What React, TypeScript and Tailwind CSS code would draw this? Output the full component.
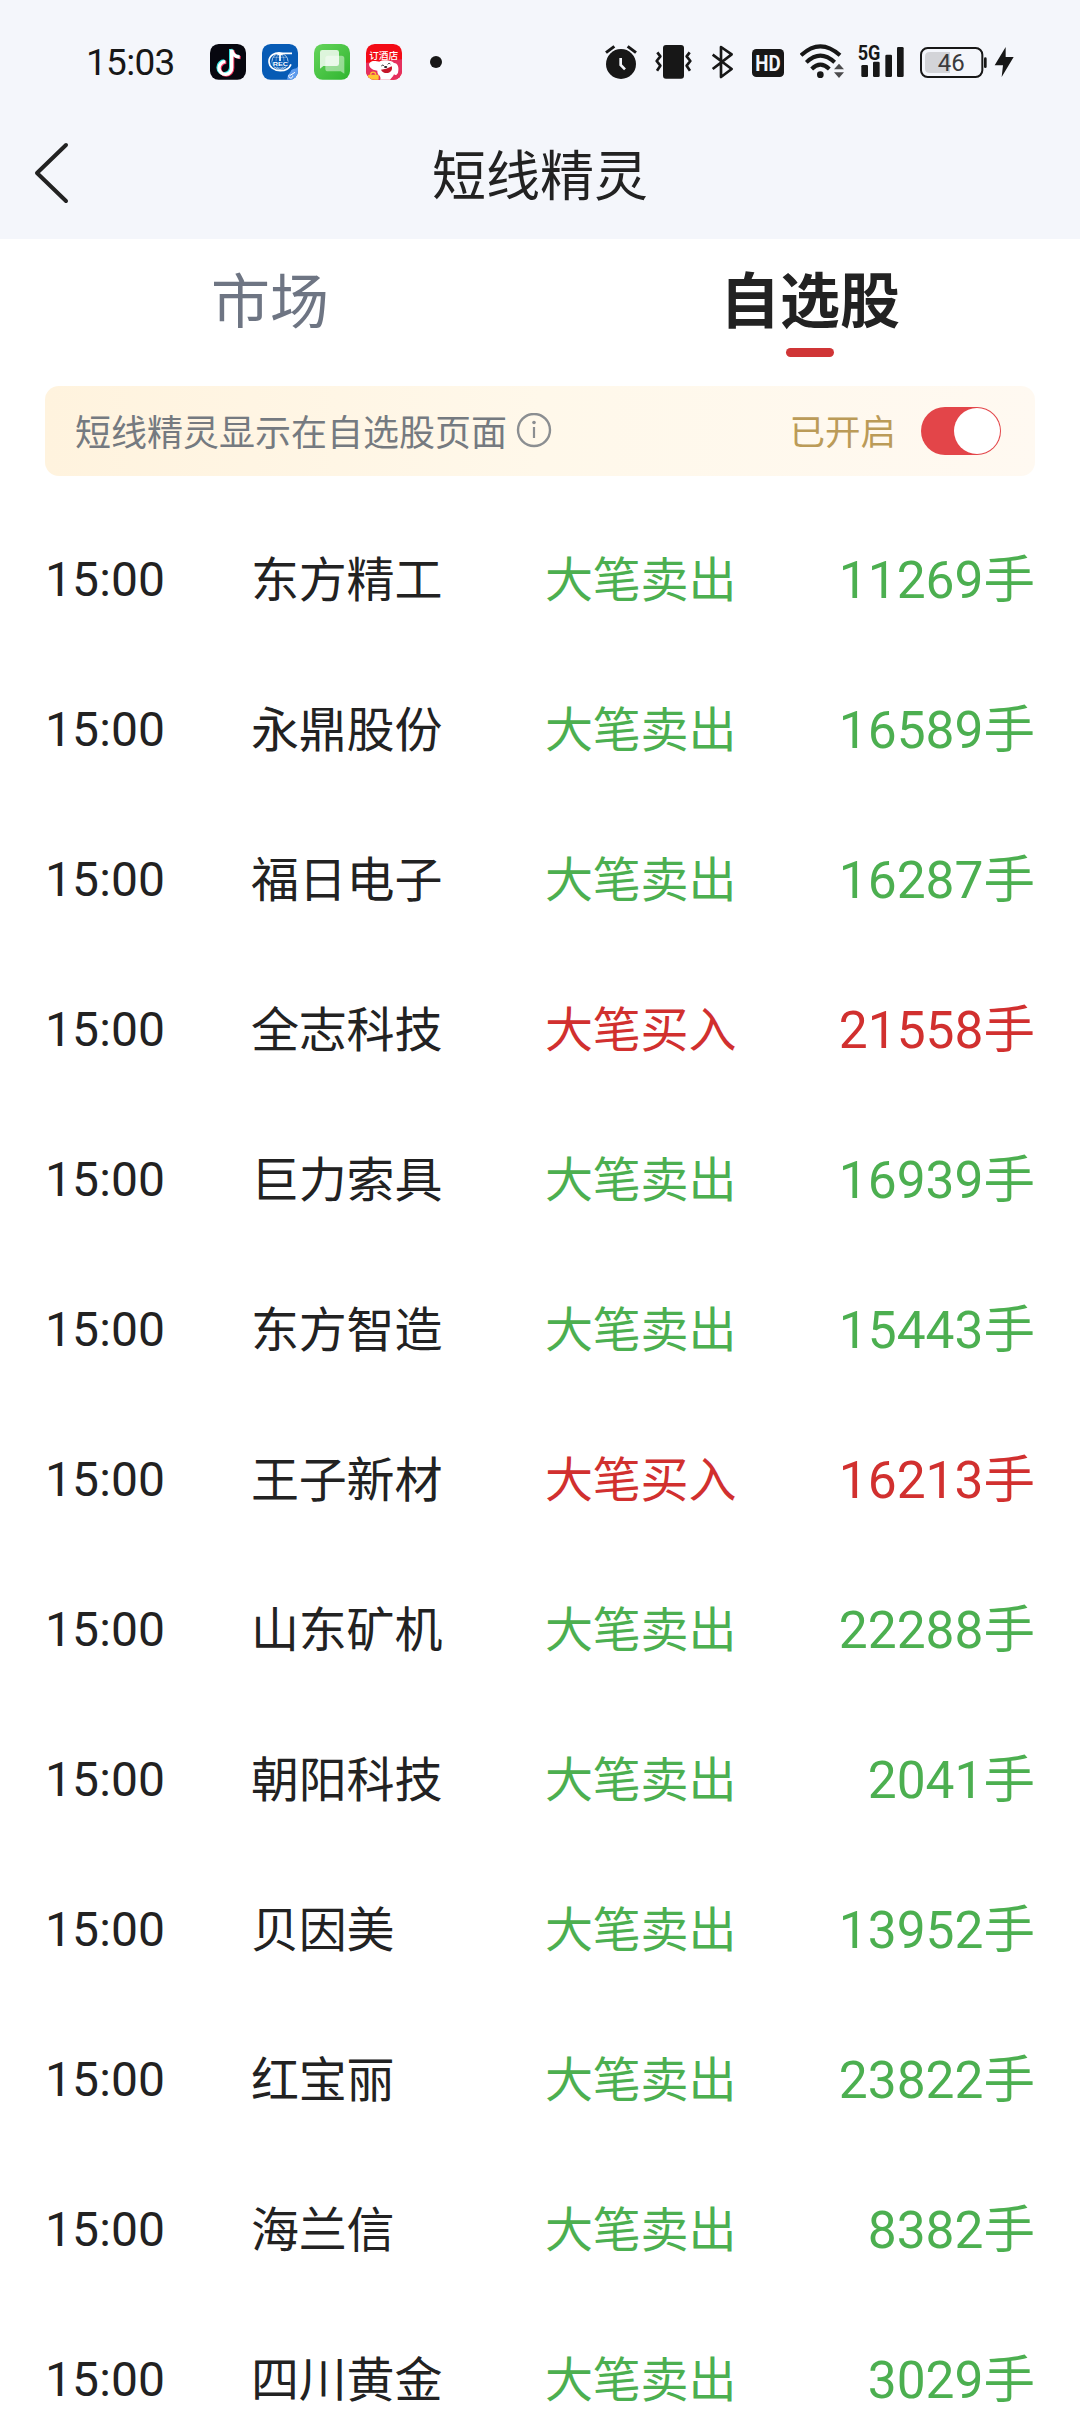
import { useState } from "react";

/* TYPES */
type Side = "buy" | "sell";

type Alert = {
  time: string;
  name: string;
  side: Side;
  volume: number;
};

/* DATA */
const alerts: Alert[] = [
  { time: "15:00", name: "东方精工", side: "sell", volume: 11269 },
  { time: "15:00", name: "永鼎股份", side: "sell", volume: 16589 },
  { time: "15:00", name: "福日电子", side: "sell", volume: 16287 },
  { time: "15:00", name: "全志科技", side: "buy", volume: 21558 },
  { time: "15:00", name: "巨力索具", side: "sell", volume: 16939 },
  { time: "15:00", name: "东方智造", side: "sell", volume: 15443 },
  { time: "15:00", name: "王子新材", side: "buy", volume: 16213 },
  { time: "15:00", name: "山东矿机", side: "sell", volume: 22288 },
  { time: "15:00", name: "朝阳科技", side: "sell", volume: 2041 },
  { time: "15:00", name: "贝因美", side: "sell", volume: 13952 },
  { time: "15:00", name: "红宝丽", side: "sell", volume: 23822 },
  { time: "15:00", name: "海兰信", side: "sell", volume: 8382 },
  { time: "15:00", name: "四川黄金", side: "sell", volume: 3029 },
];

/* APP ICONS */
const TiktokIcon = () => (
  <svg viewBox="420 44 108 108" className="w-9 h-9">
    <rect x="420" y="44" width="108" height="107" rx="26" fill="#07070f" />
    <g fill="none" strokeWidth="10">
      <path d="M482 59v54a19 19 0 1 1-19-18M482 59c2 14 9 21 24 22" stroke="#35e6e4" />
      <path d="M488 63v54a19 19 0 1 1-19-18M488 63c2 14 9 21 24 22" stroke="#f5335c" />
      <path d="M485 61v54a19 19 0 1 1-19-18M485 61c2 14 9 21 24 22" stroke="#fff" />
    </g>
  </svg>
);

const GlobeAppIcon = () => (
  <svg viewBox="36 44 108 108" className="w-9 h-9">
    <defs>
      <clipPath id="globe-clip">
        <rect x="36" y="44" width="108" height="107" rx="26" />
      </clipPath>
    </defs>
    <g clipPath="url(#globe-clip)">
      <rect x="36" y="44" width="108" height="108" fill="#075bb5" />
      <path d="M146 106c-5 14-10 10-18 14-7 3-4 8-11 13-5 5-3 11-7 19h36z" fill="#5d9bee" />
      <g fill="none" stroke="#fff">
        <circle cx="90" cy="96" r="24" strokeWidth="2" />
        <ellipse cx="90" cy="96" rx="12" ry="24" strokeWidth="1.5" opacity=".7" />
        <path d="M70 84h40M72 115h36" strokeWidth="1.5" opacity=".7" />
        <path d="M126 72H98C72 67 57 80 57 96c0 17 15 28 34 28 16 0 27-7 32-19" strokeWidth="5" />
        <path d="M82 75h16M90 75v20" strokeWidth="5" />
        <path d="M118 136a6 6 0 1 0 10 3M119 139l16-10" strokeWidth="3" />
      </g>
      <rect x="67" y="96" width="48" height="15" fill="#075bb5" />
      <text
        x="68"
        y="110"
        textLength="46"
        lengthAdjust="spacingAndGlyphs"
        fontFamily="Liberation Sans"
        fontWeight="700"
        fontSize="17"
        fill="#fff">
        REC
      </text>
    </g>
  </svg>
);

const MessageIcon = () => (
  <svg viewBox="192 44 108 108" className="w-9 h-9">
    <defs>
      <linearGradient id="msg" x1="0" y1="0" x2="1" y2="1">
        <stop offset="0" stopColor="#66d45c" />
        <stop offset="1" stopColor="#2fb52f" />
      </linearGradient>
    </defs>
    <rect x="192" y="44" width="108" height="107" rx="26" fill="url(#msg)" />
    <path d="M234 79h41q8 0 8 8v46l-11-7h-38q-8 0-8-8V87q0-8 8-8z" fill="#fff" opacity=".45" />
    <path d="M217 62h43q7 0 7 7v34q0 7-7 7h-40l-10 8V69q0-7 7-7z" fill="#fff" opacity=".8" />
  </svg>
);

const ShopIcon = () => (
  <svg viewBox="348 44 108 108" className="w-9 h-9">
    <defs>
      <clipPath id="shop-clip">
        <rect x="348" y="44" width="108" height="107" rx="26" />
      </clipPath>
    </defs>
    <g clipPath="url(#shop-clip)">
      <rect x="348" y="44" width="108" height="108" fill="#f30b16" />
      <path d="M348 100l108-10v62H348z" fill="#e5305e" />
      <rect x="354" y="136" width="32" height="16" rx="3" fill="#ffc531" />
      <path d="M362 136c0-10 15-10 15 0" fill="none" stroke="#ffc531" strokeWidth="4" />
      <path
        d="M358 102c8-11 22-5 30-5 10-6 36-6 44 4 12 0 16 14 12 29-4 9-9 7-12 5-3 8-8 10-12 17h-30c3-5 1-9-1-13-6-4-7-9-7-15-8 0-18-4-22-10-2-4-4-8-2-12z"
        fill="#fff"
      />
      <path d="M393 121c9 0 22-4 32-10 4 10-3 19-12 20-9 1-17-3-20-10z" fill="#c51629" />
      <path d="M394 110c3-4 6-3 8 0M413 105c3-4 6-3 8-1" fill="none" stroke="#222" strokeWidth="3" />
      <ellipse cx="407" cy="113" rx="5" ry="3" fill="#222" />
      <text x="401" y="88" textAnchor="middle" fontFamily="Noto Sans CJK SC" fontWeight="500" fontSize="29" fill="#fff">
        订酒店
      </text>
    </g>
  </svg>
);

/* SYSTEM ICONS */
const AlarmIcon = () => (
  <svg viewBox="45 42 96 108" className="w-8 h-9">
    <circle cx="93" cy="102" r="45" fill="#171717" />
    <path d="M48 68l25-19M138 68l-25-19" stroke="#171717" strokeWidth="9" />
    <path d="M92 84v21l13 13" fill="none" stroke="#f4f6fb" strokeWidth="8" />
  </svg>
);

const VibrateIcon = () => (
  <svg viewBox="195 42 111 108" className="w-[37px] h-9">
    <rect x="219" y="45" width="63" height="101" rx="9" fill="#171717" />
    <path
      d="M202 67l9 12-11 14 11 14-10 15M299 67l-9 12 11 14-11 14 10 15"
      fill="none"
      stroke="#171717"
      strokeWidth="8"
      strokeLinejoin="round"
    />
  </svg>
);

const BluetoothIcon = () => (
  <svg viewBox="363 42 69 108" className="w-[23px] h-9">
    <path d="M368 74l57 43-32 24V51l32 22-57 44" fill="none" stroke="#171717" strokeWidth="8" strokeLinejoin="round" />
  </svg>
);

const HdIcon = () => (
  <svg viewBox="486 42 96 108" className="w-8 h-9">
    <rect x="486" y="57" width="96" height="84" rx="13" fill="#171717" />
    <text
      x="534"
      y="122"
      textAnchor="middle"
      textLength="76"
      lengthAdjust="spacingAndGlyphs"
      fontFamily="Roboto"
      fontWeight="700"
      fontSize="66"
      fill="#f4f6fb">
      HD
    </text>
  </svg>
);

const WifiIcon = () => (
  <svg viewBox="0 42 132 108" className="w-11 h-9">
    <g fill="none" stroke="#171717" strokeWidth="12">
      <path d="M3 76Q61 22 120 76" />
      <path d="M19 97Q61 57 104 97" />
      <path d="M35 117Q61 91 88 117" />
    </g>
    <circle cx="61" cy="134" r="10" fill="#171717" />
    <path d="M102 118l15-17 15 17zM102 127l15 17 15-17z" fill="#4b4b4d" />
  </svg>
);

const SignalIcon = () => (
  <svg viewBox="168 42 147 108" className="h-9 w-[49px] overflow-visible">
    <g fill="#171717">
      <rect x="184" y="105" width="20" height="36" rx="4" />
      <rect x="219" y="95" width="20" height="46" rx="4" />
      <rect x="256" y="74" width="20" height="67" rx="4" />
      <rect x="291" y="51" width="20" height="90" rx="4" />
      <text x="173" y="89" textLength="68" lengthAdjust="spacingAndGlyphs" fontFamily="Roboto" fontWeight="700" fontSize="58">
        5G
      </text>
    </g>
  </svg>
);

const BatteryIcon = () => (
  <svg viewBox="360 42 201 108" className="w-[67px] h-9">
    <rect x="363" y="54" width="184" height="87" rx="20" fill="none" stroke="#171717" strokeWidth="6" />
    <path d="M390 66h60v63h-60q-15 0-15-13V79q0-13 15-13z" fill="#d3d4d8" />
    <rect x="552" y="82" width="8" height="32" rx="4" fill="#171717" />
    <text x="454" y="122" textAnchor="middle" fontFamily="Roboto" fontSize="72" fill="#3a3a3c">
      46
    </text>
  </svg>
);

const BoltIcon = () => (
  <svg viewBox="582 42 60 108" className="w-5 h-9">
    <path d="M617 51l-33 55h25l-4 35 36-60h-24z" fill="#171717" />
  </svg>
);

/* STATUS BAR */
const StatusBar = () => (
  <div className="flex h-[124px] items-center pl-[86px] pr-[66px] text-[#171717]">
    <span className="w-[124px] pt-px text-[37px] leading-none tracking-[-0.7px]">15:03</span>
    <div className="flex items-center gap-4">
      <TiktokIcon />
      <GlobeAppIcon />
      <MessageIcon />
      <ShopIcon />
      <span className="ml-3 h-3 w-3 rounded-full bg-[#171717]" />
    </div>
    <div className="ml-auto flex items-center">
      <AlarmIcon />
      <span className="ml-[18px]">
        <VibrateIcon />
      </span>
      <span className="ml-[19px]">
        <BluetoothIcon />
      </span>
      <span className="ml-[18px]">
        <HdIcon />
      </span>
      <span className="ml-4">
        <WifiIcon />
      </span>
      <span className="ml-3">
        <SignalIcon />
      </span>
      <span className="ml-[15px]">
        <BatteryIcon />
      </span>
      <span className="ml-[7px]">
        <BoltIcon />
      </span>
    </div>
  </div>
);

/* HEADER */
const Header = () => (
  <div className="grid h-[115px] grid-cols-[1fr_auto_1fr] items-start pl-[33px] pr-[33px]">
    <button className="mt-[17px] w-[38px] cursor-pointer">
      <svg viewBox="0 0 38 64" className="h-16 w-[38px]">
        <path d="M33 4L4 32l29 28" fill="none" stroke="#222" strokeWidth="4" strokeLinecap="round" strokeLinejoin="round" />
      </svg>
    </button>
    <h1 className="mt-[14px] text-[54px] leading-[80px]">短线精灵</h1>
  </div>
);

/* TABS */
const tabs: string[] = ["市场", "自选股"];

const Tabs = () => {
  const [active, setActive] = useState<string>("自选股");

  return (
    <div className="grid h-[147px] grid-cols-2">
      {tabs.map((tab) => (
        <button
          key={tab}
          onClick={() => setActive(tab)}
          className={`flex cursor-pointer flex-col items-center pt-[22px] leading-[84px] ${
            active === tab ? "text-[60px] font-bold text-[#222]" : "text-[59px] text-[#6e7583]"
          }`}>
          <span>{tab}</span>
          {active === tab && <span className="mt-[3px] h-[9px] w-12 rounded-full bg-[#d03536]" />}
        </button>
      ))}
    </div>
  );
};

/* BANNER */
const Banner = () => {
  const [enabled, setEnabled] = useState<boolean>(true);

  return (
    <div className="mx-[45px] flex h-[90px] items-center rounded-[14px] bg-linear-to-r from-[#fff3de] via-[#fff8ea] to-[#fff9f1] pl-[30px] pr-[34px] text-[36px] leading-none">
      <span className="pt-[5px] text-[#757a80]">短线精灵显示在自选股页面</span>
      <svg viewBox="0 0 36 36" className="ml-[9px] h-9 w-9">
        <circle cx="18" cy="17" r="16" fill="none" stroke="#8b8e91" strokeWidth="2.4" />
        <path d="M18 14v11" stroke="#8b8e91" strokeWidth="2.2" />
        <circle cx="18" cy="9.5" r="1.8" fill="#8b8e91" />
      </svg>
      <span className="ml-auto pt-[5px] text-[35.5px] text-[#bb9b58]">已开启</span>
      <button
        onClick={() => setEnabled(!enabled)}
        className={`ml-[25px] flex h-12 w-20 cursor-pointer items-center rounded-full p-px ${
          enabled ? "justify-end bg-[#e34549]" : "justify-start bg-gray-300"
        }`}>
        <span className="h-[46px] w-[46px] rounded-full bg-white" />
      </button>
    </div>
  );
};

/* ALERT LIST */
const AlertRow = ({ alert }: { alert: Alert }) => {
  const color = alert.side === "buy" ? "text-[#d1302f]" : "text-[#4caf50]";

  return (
    <li className="grid h-[150px] grid-cols-[206px_294px_1fr_auto] items-center pl-[45px] pr-[45px] text-[48px] leading-none">
      <span className="tracking-[0.1px]">{alert.time}</span>
      <span className="pt-0.5 tracking-[-0.2px]">{alert.name}</span>
      <span className={`pt-0.5 tracking-[-0.2px] ${color}`}>{alert.side === "buy" ? "大笔买入" : "大笔卖出"}</span>
      <span className={`pt-0.5 text-[51.5px] ${color}`}>{alert.volume}手</span>
    </li>
  );
};

const App = () => (
  <div className="h-[2412px] w-[1080px] overflow-hidden bg-white font-['Roboto','Noto_Sans_CJK_SC',sans-serif] text-[#222]">
    <div className="bg-[#f4f6fb]">
      <StatusBar />
      <Header />
    </div>
    <Tabs />
    <Banner />
    <ul className="mt-[29px]">
      {alerts.map((alert) => (
        <AlertRow
          key={alert.name}
          alert={alert}
        />
      ))}
    </ul>
  </div>
);

export default App;
